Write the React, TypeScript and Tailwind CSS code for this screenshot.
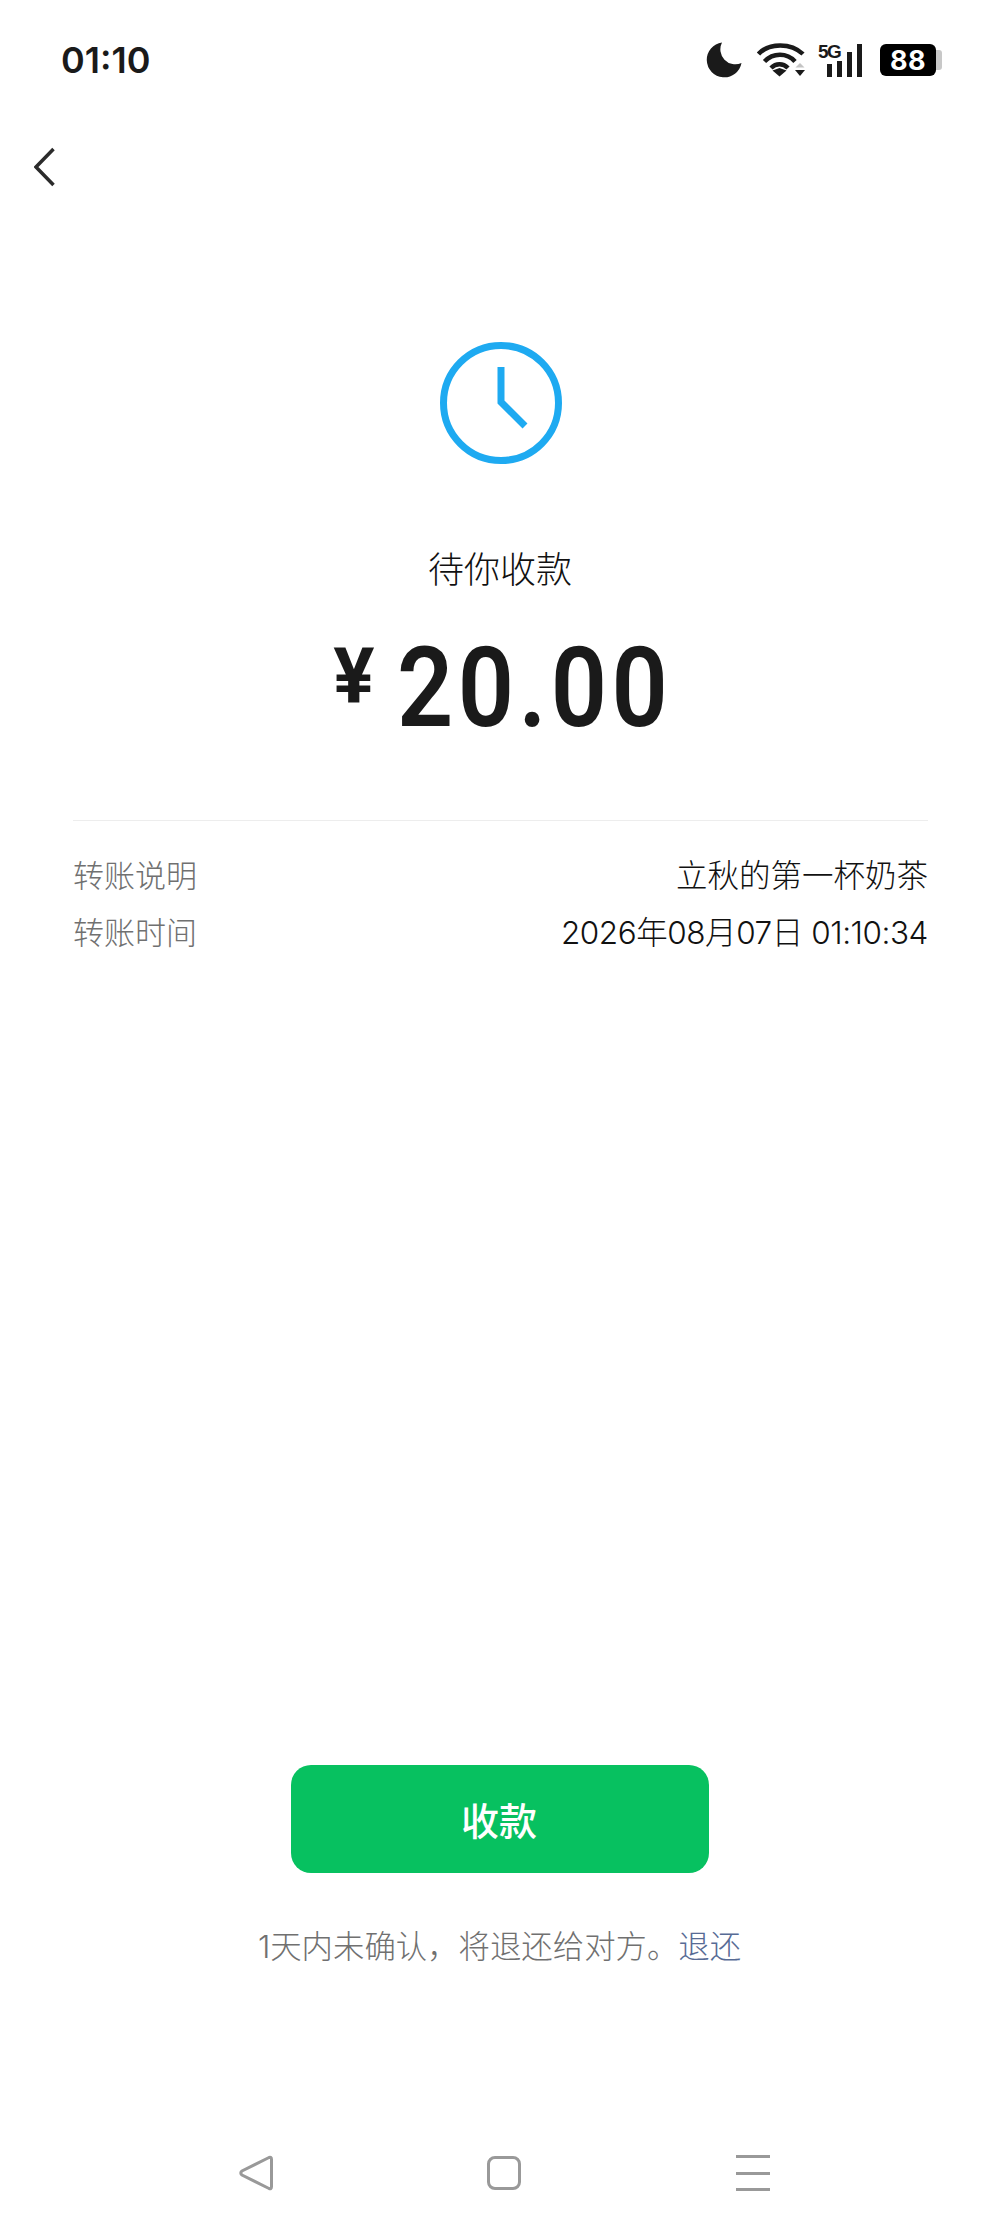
const cjk = "font-['Inter','Noto_Sans_CJK_SC',sans-serif]"

function StatusIcons() {
  return (
    <div className="flex items-center">
      {/* moon */}
      <svg width="36" height="36" viewBox="0 0 36 36" className="mr-[15px]">
        <path d="M16 0.5 A17.5 17.5 0 1 0 35.5 21 A15 15 0 0 1 16 0.5 Z" fill="#1a1a1a" />
      </svg>
      {/* wifi */}
      <svg width="50" height="34" viewBox="0 0 50 34" fill="none" className="mr-[11px]">
        <path d="M1.5 11 C12 -0.5 34 -0.5 46 11" stroke="#1a1a1a" strokeWidth="4.5" />
        <path d="M7.5 18.5 C16 9.5 30 9.5 38 18.5" stroke="#1a1a1a" strokeWidth="4.5" />
        <path d="M14 25 C19 20 26 20 31 25" stroke="#1a1a1a" strokeWidth="4.5" />
        <path d="M22.5 33.5 L15.5 27.5 L22.5 25 L29.5 27.5 Z" fill="#1a1a1a" />
        <path d="M43 20 L47.5 24.5 H38.5 Z" fill="#c4c4c4" />
        <path d="M43 33 L38 27 H48 Z" fill="#1a1a1a" />
      </svg>
      {/* 5G + signal */}
      <div className="relative w-[45px] h-[34px] mr-[17px]">
        <span className="absolute left-0 top-[-1px] font-['Liberation_Sans'] font-bold text-[19px] leading-[19px] tracking-[-1.5px] text-[#1a1a1a]">5G</span>
        <div className="absolute left-[9px] bottom-0 flex items-end gap-[5px]">
          <div className="w-[5px] h-[13px] bg-[#1a1a1a]" />
          <div className="w-[5px] h-[16px] bg-[#1a1a1a]" />
          <div className="w-[5px] h-[25px] bg-[#1a1a1a]" />
          <div className="w-[5px] h-[33px] bg-[#1a1a1a]" />
        </div>
      </div>
      {/* battery */}
      <div className="w-[56px] h-[32px] rounded-[6px] bg-black flex items-center justify-center font-['Inter'] font-bold text-[27px] leading-none tracking-[0.5px] text-white">88</div>
      <div className="w-[6px] h-[20px] rounded-r-[3px] bg-[#c8c8c8]" />
    </div>
  )
}

export default function App() {
  return (
    <div className={`w-[1000px] h-[2235px] bg-white flex flex-col overflow-hidden ${cjk}`}>
      <div className="h-[120px] pl-[61px] pr-[58px] flex items-center justify-between">
        <span className="font-['Inter'] font-semibold text-[36px] leading-none text-[#1a1a1a]">01:10</span>
        <StatusIcons />
      </div>

      <svg width="22" height="40" viewBox="0 0 22 40" fill="none" className="ml-[34px] mt-[27px]">
        <path d="M19.5 2 L2 20 L19.5 38" stroke="#2b2b2b" strokeWidth="3.5" />
      </svg>

      <div className="flex flex-col items-center mt-[155px]">
        <svg width="122" height="122" viewBox="0 0 122 122" fill="none" className="ml-[2px]">
          <circle cx="61" cy="61" r="57.5" stroke="#1eaaf1" strokeWidth="7" />
          <path d="M61 25 V60 L85 84" stroke="#1eaaf1" strokeWidth="7" />
        </svg>
        <div className="mt-[84px] text-[36px] leading-[44px] font-light text-[#111111]">待你收款</div>
        <div className="mt-[35px] h-[121px] flex items-start text-[#1a1a1a] font-['Roboto']">
          <span className="mt-[5px] text-[77px] leading-[90px] font-bold mr-[22px]">¥</span>
          <span className="block w-[270px] whitespace-nowrap origin-left scale-x-[0.88] text-[112px] leading-[122px] font-semibold tracking-[5px]">20.00</span>
        </div>
      </div>

      <div className="ml-[73px] mr-[72px] mt-[72px] border-t border-[#ededed] pt-[26px] text-[31px] leading-[57px] font-light">
        <div className="flex justify-between">
          <span className="text-[#707070]">转账说明</span>
          <span className="text-[31.5px] text-[#111111]">立秋的第一杯奶茶</span>
        </div>
        <div className="flex justify-between">
          <span className="text-[#707070]">转账时间</span>
          <span className="text-[31.5px] tracking-[-0.45px] text-[#111111]">2026年08月07日 01:10:34</span>
        </div>
      </div>

      <div className="mt-auto flex flex-col items-center pb-[44px]">
        <button className="w-[418px] h-[108px] pt-[4px] pr-[2px] rounded-[20px] bg-[#07c160] text-white text-[38px] font-medium">收款</button>
        <div className="mt-[52px] ml-[-1px] text-[31.4px] leading-[44px] font-light text-[#707070]">
          1天内未确认，将退还给对方。<span className="text-[#576b95]">退还</span>
        </div>
        <div className="mt-[186px] ml-[8px] w-[531px] flex items-center justify-between">
          <svg width="34" height="36" viewBox="0 0 34 36" fill="none">
            <path d="M30 2.5 Q32.5 1.5 32.5 4.5 V31.5 Q32.5 34.5 30 33.5 L3 20 Q0.5 18 3 16 Z" stroke="#999" strokeWidth="3" />
          </svg>
          <div className="w-[34px] h-[34px] rounded-[8px] border-[3px] border-[#999]" />
          <div className="w-[34px] h-[36px] flex flex-col justify-between">
            <div className="h-[3px] bg-[#999]" />
            <div className="h-[3px] bg-[#999]" />
            <div className="h-[3px] bg-[#999]" />
          </div>
        </div>
      </div>
    </div>
  )
}
